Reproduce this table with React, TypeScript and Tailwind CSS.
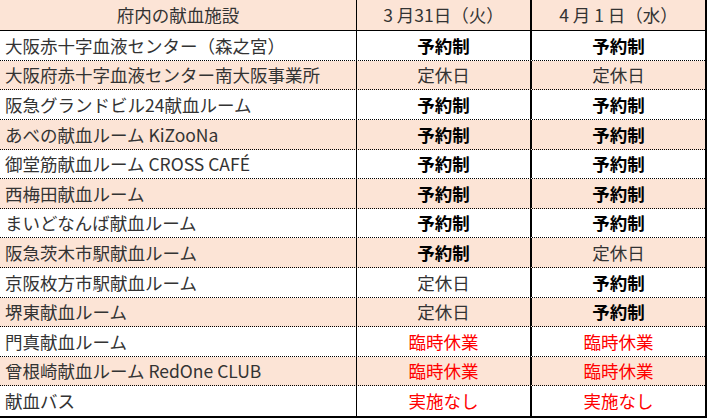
import React from "react";

type Status = "予約制" | "定休日" | "臨時休業" | "実施なし";

type Row = {
  name: string;
  day1: Status;
  day2: Status;
  tall: boolean;
};

const rows: Row[] = [
  { name: "大阪赤十字血液センター（森之宮）", day1: "予約制", day2: "予約制", tall: true },
  { name: "大阪府赤十字血液センター南大阪事業所", day1: "定休日", day2: "定休日", tall: false },
  { name: "阪急グランドビル24献血ルーム", day1: "予約制", day2: "予約制", tall: true },
  { name: "あべの献血ルーム KiZooNa", day1: "予約制", day2: "予約制", tall: true },
  { name: "御堂筋献血ルーム CROSS CAFÉ", day1: "予約制", day2: "予約制", tall: false },
  { name: "西梅田献血ルーム", day1: "予約制", day2: "予約制", tall: true },
  { name: "まいどなんば献血ルーム", day1: "予約制", day2: "予約制", tall: false },
  { name: "阪急茨木市駅献血ルーム", day1: "予約制", day2: "定休日", tall: true },
  { name: "京阪枚方市駅献血ルーム", day1: "定休日", day2: "予約制", tall: true },
  { name: "堺東献血ルーム", day1: "定休日", day2: "予約制", tall: false },
  { name: "門真献血ルーム", day1: "臨時休業", day2: "臨時休業", tall: true },
  { name: "曾根崎献血ルーム RedOne CLUB", day1: "臨時休業", day2: "臨時休業", tall: false },
  { name: "献血バス", day1: "実施なし", day2: "実施なし", tall: true },
];

function StatusText({ value }: { value: Status }) {
  if (value === "予約制") {
    return <span className="font-bold text-black">{value}</span>;
  }
  if (value === "定休日") {
    return <span className="text-[#333333]">{value}</span>;
  }
  return <span className="text-[#ff0000]">{value}</span>;
}

export default function App() {
  return (
    <div className="h-[419px] w-[709px] bg-white font-['Noto_Sans_CJK_JP',sans-serif] text-[17.5px] leading-none text-[#333333]">
      <div className="w-[707px] border-b-2 border-r-2 border-black">
        <div className="flex h-[31px] border-b border-black bg-[#fce4d6]">
          <div className="flex w-[357px] items-center justify-center border-r border-black">府内の献血施設</div>
          <div className="flex w-[175px] items-center justify-center border-r-2 border-black">3 月31日（火）</div>
          <div className="flex flex-1 items-center justify-center">4 月 1 日（水）</div>
        </div>
        {rows.map((row, i) => {
          const last = i === rows.length - 1;
          return (
            <div
              key={row.name}
              className={[
                "flex",
                row.tall ? "h-[30px]" : "h-[29px]",
                i % 2 === 1 ? "bg-[#fce4d6]" : "bg-white",
                last ? "" : "border-b border-dotted border-black",
              ].join(" ")}
            >
              <div className="flex w-[357px] items-center border-r border-black pl-[5px] whitespace-nowrap">{row.name}</div>
              <div className="flex w-[175px] items-center justify-center border-r-2 border-black">
                <StatusText value={row.day1} />
              </div>
              <div className="flex flex-1 items-center justify-center">
                <StatusText value={row.day2} />
              </div>
            </div>
          );
        })}
      </div>
    </div>
  );
}
